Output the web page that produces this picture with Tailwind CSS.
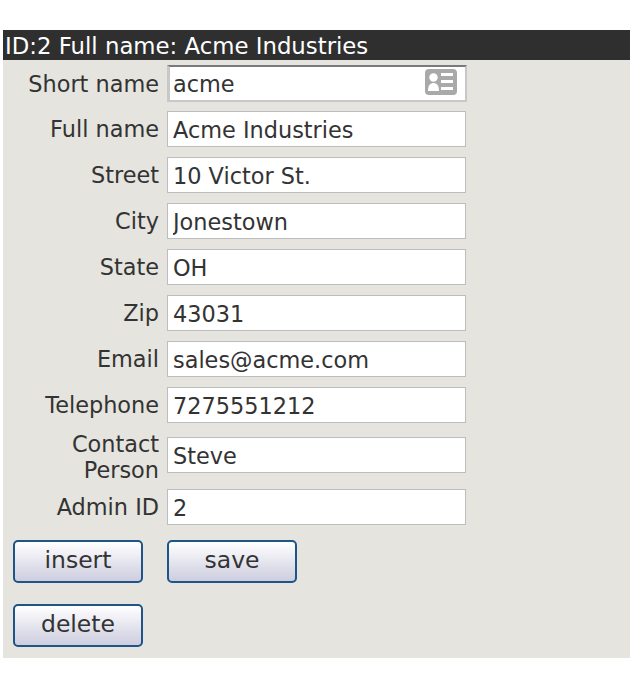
<!DOCTYPE html>
<html lang="en">
<head>
  <meta charset="UTF-8" />
  <title>Customer</title>
  <script src="https://cdn.jsdelivr.net/npm/@tailwindcss/browser@4"></script>
</head>
<body class="bg-white font-['DejaVu_Sans',sans-serif] text-[#333]">
  <div class="ml-[3px] mt-[30px] w-[627px] h-[628px] bg-[#e5e4df]">
    <!-- Title bar -->
    <div class="h-[30px] bg-[#2f2f2f] text-white text-[22.8px] leading-[31px] pl-[2px] pt-[1px] whitespace-nowrap">ID:2 Full name: Acme Industries</div>

    <div class="pt-[5px] flex flex-col">
      <!-- Short name, has the lookup icon -->
      <div class="flex items-center h-[37px] mb-[9px]">
        <label class="w-[156px] pt-[2px] text-right text-[22.4px]">Short name</label>
        <div class="relative ml-[8px] w-[300px] h-[37px]">
          <input value="acme" class="w-full h-full bg-white border-2 border-l-[3px] border-[#c8c8c8] border-t-[#7a7a7a] pl-[3px] pt-[1px] text-[22.4px] text-[#333] outline-none" />
          <svg class="absolute right-[10px] top-[4px]" width="32" height="26" viewBox="0 0 32 26">
            <rect x="0" y="0" width="32" height="26" rx="4" fill="#a9a9a9"/>
            <circle cx="8.500" cy="8.500" r="4.200" fill="#fff"/>
            <path d="M3 22c0-6 2.500-8 5.500-8s5.500 2 5.500 8z" fill="#fff"/>
            <rect x="16" y="4" width="12" height="3" fill="#fff"/>
            <rect x="16" y="11" width="12" height="3" fill="#fff"/>
            <rect x="16" y="18" width="12" height="3" fill="#fff"/>
          </svg>
        </div>
      </div>

      <div class="flex items-center h-[36px] mb-[10px]">
        <label class="w-[156px] pt-[2px] text-right text-[22.4px]">Full name</label>
        <input value="Acme Industries" class="ml-[8px] w-[299px] h-[36px] bg-white border border-[#bdbdbd] pl-[5px] pt-[1px] text-[22.4px] text-[#333] outline-none" />
      </div>
      <div class="flex items-center h-[36px] mb-[10px]">
        <label class="w-[156px] pt-[2px] text-right text-[22.4px]">Street</label>
        <input value="10 Victor St." class="ml-[8px] w-[299px] h-[36px] bg-white border border-[#bdbdbd] pl-[5px] pt-[1px] text-[22.4px] text-[#333] outline-none" />
      </div>
      <div class="flex items-center h-[36px] mb-[10px]">
        <label class="w-[156px] pt-[2px] text-right text-[22.4px]">City</label>
        <input value="Jonestown" class="ml-[8px] w-[299px] h-[36px] bg-white border border-[#bdbdbd] pl-[5px] pt-[1px] text-[22.4px] text-[#333] outline-none" />
      </div>
      <div class="flex items-center h-[36px] mb-[10px]">
        <label class="w-[156px] pt-[2px] text-right text-[22.4px]">State</label>
        <input value="OH" class="ml-[8px] w-[299px] h-[36px] bg-white border border-[#bdbdbd] pl-[5px] pt-[1px] text-[22.4px] text-[#333] outline-none" />
      </div>
      <div class="flex items-center h-[36px] mb-[10px]">
        <label class="w-[156px] pt-[2px] text-right text-[22.4px]">Zip</label>
        <input value="43031" class="ml-[8px] w-[299px] h-[36px] bg-white border border-[#bdbdbd] pl-[5px] pt-[1px] text-[22.4px] text-[#333] outline-none" />
      </div>
      <div class="flex items-center h-[36px] mb-[10px]">
        <label class="w-[156px] pt-[2px] text-right text-[22.4px]">Email</label>
        <input value="sales@acme.com" class="ml-[8px] w-[299px] h-[36px] bg-white border border-[#bdbdbd] pl-[5px] pt-[1px] text-[22.4px] text-[#333] outline-none" />
      </div>
      <div class="flex items-center h-[36px] mb-[14px]">
        <label class="w-[156px] pt-[2px] text-right text-[22.4px]">Telephone</label>
        <input value="7275551212" class="ml-[8px] w-[299px] h-[36px] bg-white border border-[#bdbdbd] pl-[5px] pt-[1px] text-[22.4px] text-[#333] outline-none" />
      </div>
      <div class="flex items-center h-[36px] mb-[16px]">
        <label class="w-[156px] pt-[4px] text-right text-[22.4px] leading-[26px]">Contact<br>Person</label>
        <input value="Steve" class="ml-[8px] w-[299px] h-[36px] bg-white border border-[#bdbdbd] pl-[5px] pt-[1px] text-[22.4px] text-[#333] outline-none" />
      </div>
      <div class="flex items-center h-[36px]">
        <label class="w-[156px] pt-[2px] text-right text-[22.4px]">Admin ID</label>
        <input value="2" class="ml-[8px] w-[299px] h-[36px] bg-white border border-[#bdbdbd] pl-[5px] pt-[1px] text-[22.4px] text-[#333] outline-none" />
      </div>

      <!-- Buttons -->
      <div class="mt-[15px] ml-[10px] flex gap-[24px]">
        <button class="w-[130px] h-[43px] pb-[2px] rounded-[5px] border-2 border-[#1f5488] bg-gradient-to-b from-white to-[#cdcddf] text-[#333] text-[23.5px] leading-none">insert</button>
        <button class="w-[130px] h-[43px] pb-[2px] rounded-[5px] border-2 border-[#1f5488] bg-gradient-to-b from-white to-[#cdcddf] text-[#333] text-[23.5px] leading-none">save</button>
      </div>
      <div class="mt-[21px] ml-[10px]">
        <button class="w-[130px] h-[43px] pb-[2px] rounded-[5px] border-2 border-[#1f5488] bg-gradient-to-b from-white to-[#cdcddf] text-[#333] text-[23.5px] leading-none">delete</button>
      </div>
    </div>
  </div>
</body>
</html>
